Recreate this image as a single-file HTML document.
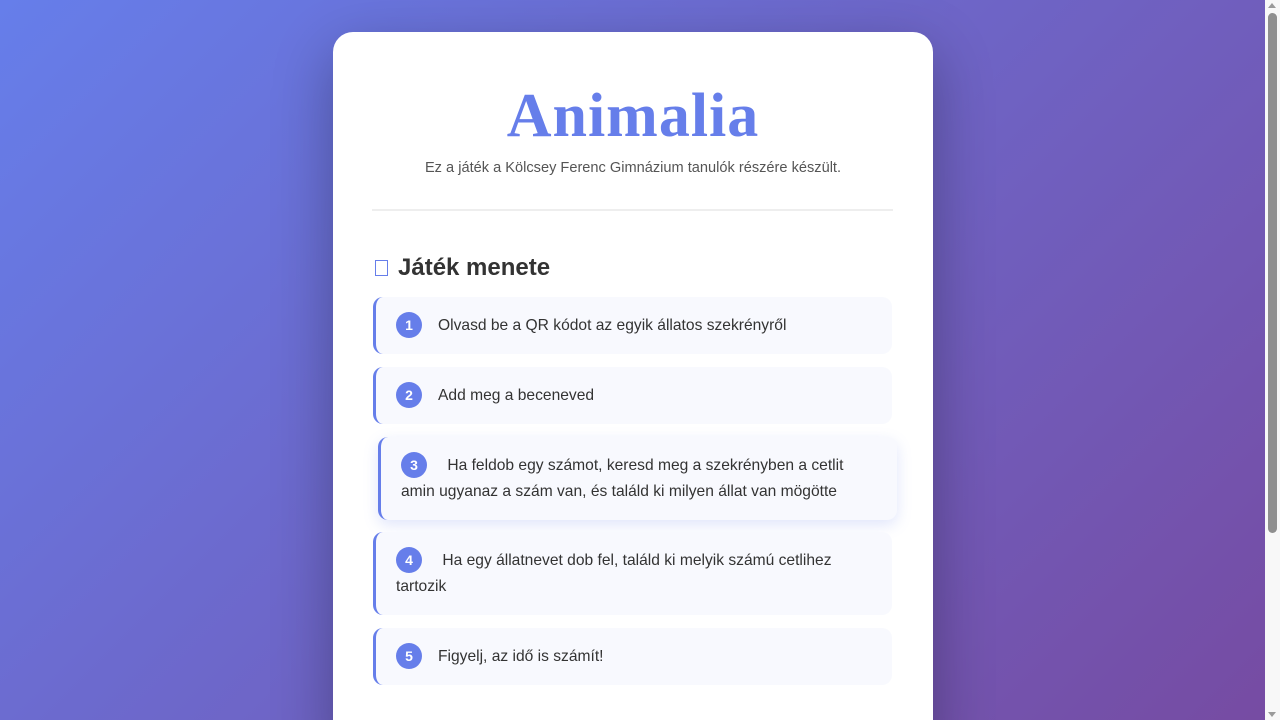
<!DOCTYPE html>
<html><head><meta charset="utf-8"><style>
html,body{margin:0;height:720px;overflow:hidden}
body{background:linear-gradient(135deg,#667eea 0%,#764ba2 100%);font-family:"Liberation Sans","DejaVu Sans",sans-serif;position:relative;width:1280px}
.sb{position:absolute;right:0;top:0;width:15px;height:720px;background:#f8f8f8}
.sb .th{position:absolute;left:3px;top:13px;width:9px;height:520px;background:#8f8f8f;border-radius:5px}
.sb .up,.sb .dn{position:absolute;left:3px;width:0;height:0;border-left:4.5px solid transparent;border-right:4.5px solid transparent}
.sb .up{top:3px;border-bottom:5px solid #9a9a9a}.sb .dn{bottom:3px;border-top:5px solid #9a9a9a}
.card{position:absolute;left:333px;top:32px;width:600px;height:720px;background:#fff;border-radius:20px;box-shadow:0 20px 60px rgba(0,0,0,.3)}
h1{margin:0;position:absolute;top:44px;left:0;width:600px;text-align:center;font-family:"Liberation Serif",serif;font-size:62px;font-weight:bold;color:#667eea;line-height:1.3;letter-spacing:1px}
.sub{position:absolute;top:128px;width:600px;text-align:center;color:#555;font-size:14.6px}
.hr{position:absolute;left:39px;top:177px;width:521px;height:2px;background:#eee}
h2{position:absolute;left:42px;top:220px;margin:0;font-size:24px;color:#333;font-weight:bold;line-height:1.3}
h2 span{display:inline-block;width:11px;height:14px;border:1px solid #667eea;margin-right:10px;vertical-align:-1px}
.it{position:absolute;left:40px;width:519px;background:#f8f9fe;border-left:3px solid #667eea;border-radius:10px;padding:16px 20px;box-sizing:border-box;font-size:15.6px;color:#333;line-height:26px}
.n{display:inline-block;width:26px;height:26px;border-radius:50%;background:#667eea;color:#fff;font-weight:bold;font-size:14px;text-align:center;line-height:26px;margin-right:16px}
</style></head><body>
<div class="card">
<h1>Animalia</h1>
<div class="sub">Ez a játék a Kölcsey Ferenc Gimnázium tanulók részére készült.</div>
<div class="hr"></div>
<h2><span></span>Játék menete</h2>
<div class="it" style="top:265px;height:57px;padding-top:15px"><span class="n">1</span>Olvasd be a QR kódot az egyik állatos szekrényről</div>
<div class="it" style="top:335px;height:57px;padding-top:15px"><span class="n">2</span>Add meg a beceneved</div>
<div class="it" style="top:405px;left:45px;height:83px;padding-top:15px;padding-right:40px;box-shadow:0 5px 15px rgba(102,126,234,.2)"><span class="n">3</span> Ha feldob egy számot, keresd meg a szekrényben a cetlit amin ugyanaz a szám van, és találd ki milyen állat van mögötte</div>
<div class="it" style="top:500px;height:83px;padding-top:15px;padding-right:40px"><span class="n">4</span> Ha egy állatnevet dob fel, találd ki melyik számú cetlihez tartozik</div>
<div class="it" style="top:596px;height:57px;padding-top:15px"><span class="n">5</span>Figyelj, az idő is számít!</div>
</div>
<div class="sb"><div class="up"></div><div class="th"></div><div class="dn"></div></div>
</body></html>
